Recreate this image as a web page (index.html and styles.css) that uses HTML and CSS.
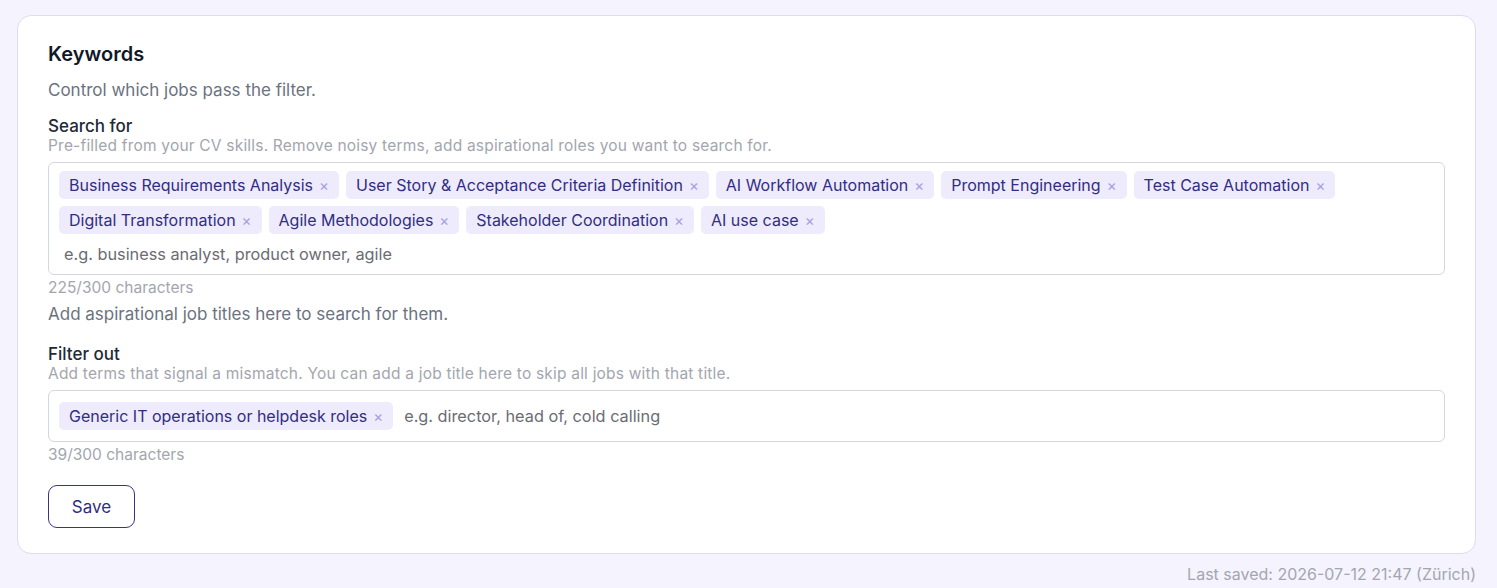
FILE: index.html
```html
<!DOCTYPE html>
<html lang="en">
<head>
    <meta charset="UTF-8">
    <meta name="viewport" content="width=device-width, initial-scale=1.0">
    <title>Keywords</title>
    <link rel="stylesheet" href="styles.css">
</head>
<body>
    <div class="page">
        <section class="card">
            <h2 class="card-title">Keywords</h2>
            <p class="card-desc">Control which jobs pass the filter.</p>

            <div class="field">
                <label class="field-label">Search for</label>
                <div class="field-hint">Pre-filled from your CV skills. Remove noisy terms, add aspirational roles you want to search for.</div>
                <div class="tag-input">
                    <span class="chip">Business Requirements Analysis <span class="chip-x">×</span></span>
                    <span class="chip">User Story &amp; Acceptance Criteria Definition <span class="chip-x">×</span></span>
                    <span class="chip">AI Workflow Automation <span class="chip-x">×</span></span>
                    <span class="chip">Prompt Engineering <span class="chip-x">×</span></span>
                    <span class="chip">Test Case Automation <span class="chip-x">×</span></span>
                    <span class="chip">Digital Transformation <span class="chip-x">×</span></span>
                    <span class="chip">Agile Methodologies <span class="chip-x">×</span></span>
                    <span class="chip">Stakeholder Coordination <span class="chip-x">×</span></span>
                    <span class="chip">AI use case <span class="chip-x">×</span></span>
                    <input class="tag-text full" type="text" placeholder="e.g. business analyst, product owner, agile">
                </div>
                <div class="counter">225/300 characters</div>
                <div class="field-note">Add aspirational job titles here to search for them.</div>
            </div>

            <div class="field">
                <label class="field-label">Filter out</label>
                <div class="field-hint">Add terms that signal a mismatch. You can add a job title here to skip all jobs with that title.</div>
                <div class="tag-input">
                    <span class="chip">Generic IT operations or helpdesk roles <span class="chip-x">×</span></span>
                    <input class="tag-text" type="text" placeholder="e.g. director, head of, cold calling">
                </div>
                <div class="counter">39/300 characters</div>
            </div>

            <button class="save-btn">Save</button>
        </section>
        <div class="last-saved">Last saved: 2026-07-12 21:47 (Zürich)</div>
    </div>
</body>
</html>
```

FILE: styles.css
```css
body {
    margin: 0;
    background: #f5f4fe;
    font-family: 'Inter', 'Noto Sans', sans-serif;
    color: #1f2937;
}

.page {
    padding: 15px 21px 0 17px;
}

.card {
    background: #fff;
    border: 1px solid #dedbf3;
    border-radius: 14px;
    padding: 26px 30px 25px;
}

.card-title {
    margin: 0;
    font-size: 20px;
    font-weight: 600;
    line-height: 24px;
    color: #111827;
}

.card-desc {
    margin: 12px 0 0;
    font-size: 17px;
    line-height: 24px;
    color: #6b7280;
}

.field {
    margin-top: 13px;
}

.field + .field {
    margin-top: 18px;
}

.field-label {
    display: block;
    font-size: 17px;
    font-weight: 500;
    line-height: 22px;
    color: #1f2937;
}

.field-hint {
    font-size: 15.5px;
    letter-spacing: 0.2px;
    line-height: 18px;
    color: #a3a6ae;
}

.tag-input {
    display: flex;
    flex-wrap: wrap;
    align-items: center;
    gap: 7px;
    margin-top: 7px;
    padding: 8px 10px;
    border: 1px solid #d6d6de;
    border-radius: 6px;
}

.chip {
    display: inline-flex;
    align-items: center;
    gap: 6px;
    height: 28px;
    padding: 0 10px;
    background: #eeebfd;
    border-radius: 5px;
    font-size: 16px;
    color: #312e81;
}

.chip-x {
    font-size: 15px;
    color: #a5a1dd;
}

.tag-text {
    flex: 1;
    min-width: 200px;
    border: none;
    outline: none;
    padding: 0 4px;
    height: 34px;
    font-family: inherit;
    font-size: 16.3px;
    color: #374151;
}

.tag-text.full {
    flex-basis: 100%;
    height: 25px;
    padding: 0 5px;
}

.tag-text::placeholder {
    color: #6b6b73;
}

.counter {
    margin-top: 4px;
    font-size: 15.5px;
    line-height: 18px;
    color: #a3a6ae;
}

.field-note {
    margin-top: 6px;
    font-size: 17px;
    line-height: 22px;
    color: #6b7280;
}

.save-btn {
    display: block;
    margin-top: 21px;
    width: 87px;
    height: 43px;
    background: #fff;
    border: 1px solid #3b3486;
    border-radius: 9px;
    font-family: inherit;
    font-size: 17px;
    color: #312e81;
    cursor: pointer;
}

.last-saved {
    margin-top: 9px;
    text-align: right;
    font-size: 16px;
    line-height: 22px;
    color: #a3a6ae;
}
```
